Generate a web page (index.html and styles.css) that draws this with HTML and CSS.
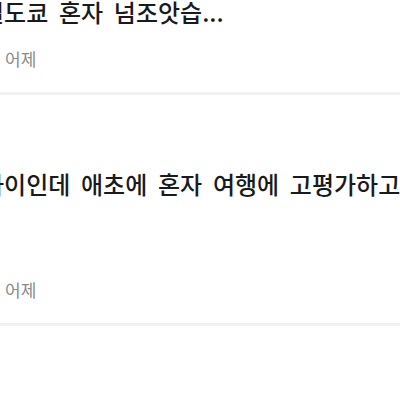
FILE: index.html
```html
<!DOCTYPE html>
<html lang="ko">
<head>
<meta charset="utf-8">
<title>목록</title>
<link rel="stylesheet" href="styles.css">
</head>
<body>
<ul class="feed">
  <li class="item item-first">
    <p class="title">일도쿄 혼자 넘조앗습...</p>
    <p class="date">어제</p>
  </li>
  <li class="item item-second">
    <p class="title">아이인데 애초에 혼자 여행에 고평가하고</p>
    <p class="date date-far">어제</p>
  </li>
</ul>
</body>
</html>
```

FILE: styles.css
```css
html, body {
  margin: 0;
  padding: 0;
  background: #ffffff;
  overflow: hidden;
  width: 400px;
  height: 400px;
}

body {
  font-family: "Noto Sans CJK KR", "Noto Sans", sans-serif;
}

.feed {
  list-style: none;
  margin: 0;
  padding: 0;
}

.item {
  overflow: hidden;
  padding-bottom: 25px;
  border-bottom: 3px solid #f1f1f1;
}

.item-first {
  padding-top: 0;
}

.item-second {
  padding-top: 77px;
}

.title {
  margin: 0 0 0 -18px;
  font-size: 24px;
  line-height: 24px;
  font-weight: 500;
  color: #1a1a1a;
  white-space: nowrap;
  word-spacing: 4px;
}

.date {
  margin: 26px 0 0 5px;
  font-size: 17px;
  line-height: 17px;
  color: #8a8a8a;
}

.date-far {
  margin-top: 85px;
}
```
